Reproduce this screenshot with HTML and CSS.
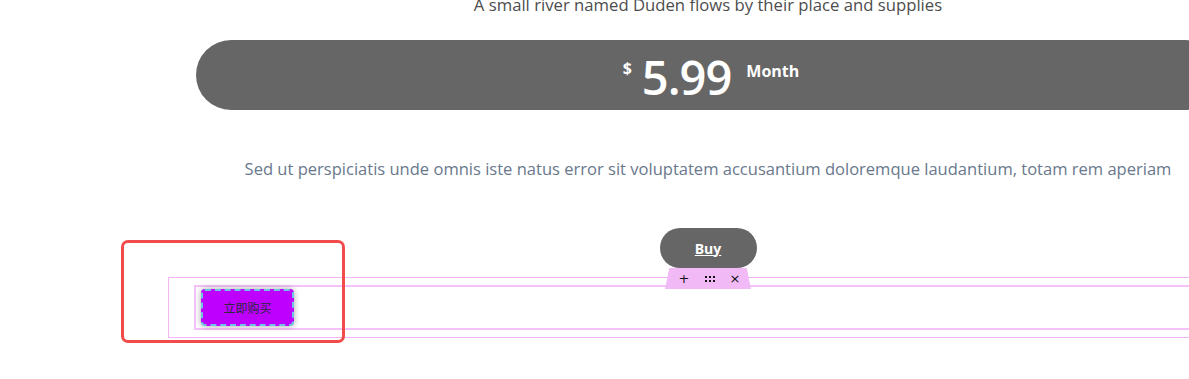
FILE: index.html
```html
<!DOCTYPE html>
<html>
<head>
<meta charset="utf-8">
<link rel="stylesheet" href="styles.css">
</head>
<body>
<div class="page">
  <p class="lead">A small river named Duden flows by their place and supplies</p>
  <div class="price-bar">
    <span class="currency">$</span>
    <span class="amount">5.99</span>
    <span class="period">Month</span>
  </div>
  <p class="desc">Sed ut perspiciatis unde omnis iste natus error sit voluptatem accusantium doloremque laudantium, totam rem aperiam</p>
  <div class="buy-row"><a class="buy-btn" href="#">Buy</a></div>
  <div class="editor-outer">
    <div class="toolbar">
      <span class="tb-icon">+</span>
      <span class="tb-dots"><i></i><i></i><i></i><i></i><i></i><i></i></span>
      <span class="tb-icon">×</span>
    </div>
    <div class="editor-inner">
      <button class="cn-btn">立即购买</button>
    </div>
  </div>
</div>
<div class="highlight"></div>
</body>
</html>
```
FILE: styles.css
```css
html, body {
  margin: 0;
  padding: 0;
  background: #ffffff;
  overflow: hidden;
}
body {
  width: 1189px;
  height: 379px;
  position: relative;
  font-family: "Open Sans", "Noto Sans CJK SC", sans-serif;
}
.page {
  margin-left: 168px;
  width: 1080px;
}
.lead {
  margin: -6px 0 0;
  height: 46px;
  font-size: 16.7px;
  line-height: 22px;
  color: #4d4d4d;
  text-align: center;
}
.price-bar {
  margin: 0 28px;
  padding-left: 6px;
  height: 70px;
  border-radius: 35px;
  background: #666666;
  display: flex;
  justify-content: center;
  align-items: center;
  color: #ffffff;
  font-weight: 700;
}
.currency {
  font-size: 16px;
  align-self: flex-start;
  margin-top: 17px;
  margin-right: 10px;
}
.amount {
  font-size: 47px;
  font-weight: 600;
  letter-spacing: -1px;
  line-height: 1;
  margin-top: 4px;
  margin-right: 15px;
}
.period {
  font-size: 16px;
  align-self: flex-start;
  margin-top: 20px;
}
.desc {
  margin: 48px 0 0;
  font-size: 16.55px;
  line-height: 22px;
  color: #69788c;
  text-align: center;
}
.buy-row {
  display: flex;
  justify-content: center;
  margin-top: 48px;
}
.buy-btn {
  display: flex;
  align-items: center;
  justify-content: center;
  width: 97px;
  height: 40px;
  border-radius: 20px;
  background: #666666;
  color: #ffffff;
  font-size: 14px;
  font-weight: 700;
  text-decoration: underline;
}
.editor-outer {
  position: relative;
  margin-top: 9px;
  height: 52px;
  border: 1px solid #f2b6f6;
  padding: 7px 0 0 25px;
  box-sizing: content-box;
}
.toolbar {
  position: absolute;
  left: 496px;
  top: -10px;
  width: 86px;
  height: 21px;
  background: #f2b9f7;
  clip-path: polygon(5% 0, 95% 0, 100% 100%, 0 100%);
  display: flex;
  align-items: center;
  justify-content: center;
  gap: 15px;
  padding-left: 3px;
  box-sizing: border-box;
  font-family: "DejaVu Sans", sans-serif;
  font-size: 13px;
  color: #111111;
  z-index: 2;
}
.tb-icon {
  line-height: 1;
}
.tb-dots {
  display: grid;
  grid-template-columns: repeat(3, 2px);
  gap: 2px 2px;
}
.tb-dots i {
  display: block;
  width: 2px;
  height: 2px;
  background: #111111;
}
.editor-inner {
  height: 39px;
  border-top: 2px solid #f4c2f8;
  border-bottom: 2px solid #f4c2f8;
  border-left: 2px solid #f4c2f8;
  padding: 2px 0 0 5px;
}
.cn-btn {
  width: 93px;
  height: 37px;
  background: #be00ff;
  border: 2px dashed #6ec3e6;
  border-radius: 4px;
  box-shadow: 0 0 6px rgba(0, 0, 0, 0.35);
  color: #2a2a3a;
  font-family: "Noto Sans CJK SC", sans-serif;
  font-size: 12px;
  padding: 0;
}
.highlight {
  position: absolute;
  left: 121px;
  top: 240px;
  width: 218px;
  height: 97px;
  border: 3px solid #f24b4b;
  border-radius: 7px;
}
```
